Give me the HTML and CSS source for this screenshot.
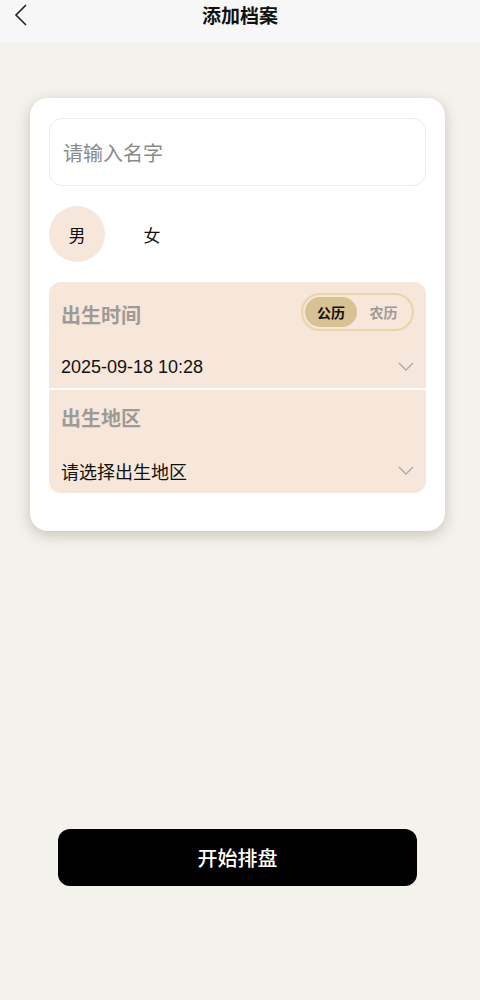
FILE: index.html
```html
<!DOCTYPE html>
<html lang="zh">
<head>
<meta charset="utf-8">
<title>添加档案</title>
<link rel="stylesheet" href="styles.css">
</head>
<body>
<header class="topbar">
  <span class="back">
    <svg width="14" height="22" viewBox="0 0 14 22"><polyline points="12,1 2,11 12,21" fill="none" stroke="#222" stroke-width="1.6"/></svg>
  </span>
  <h1 class="title">添加档案</h1>
</header>
<main class="page">
  <section class="card">
    <div class="name-input">请输入名字</div>
    <div class="gender-row">
      <span class="gender active">男</span>
      <span class="gender">女</span>
    </div>
    <div class="panel panel-top">
      <div class="panel-head">
        <span class="label">出生时间</span>
        <div class="toggle">
          <span class="toggle-item on">公历</span>
          <span class="toggle-item">农历</span>
        </div>
      </div>
      <div class="value-row date-row">
        <span class="value">2025-09-18 10:28</span>
        <svg class="chev" width="16" height="10" viewBox="0 0 16 10"><polyline points="1,1 8,8 15,1" fill="none" stroke="#b0aaa5" stroke-width="1.4"/></svg>
      </div>
    </div>
    <div class="panel panel-bottom">
      <div class="panel-head head2">
        <span class="label">出生地区</span>
      </div>
      <div class="value-row place-row">
        <span class="value">请选择出生地区</span>
        <svg class="chev" width="16" height="10" viewBox="0 0 16 10"><polyline points="1,1 8,8 15,1" fill="none" stroke="#b0aaa5" stroke-width="1.4"/></svg>
      </div>
    </div>
  </section>
  <button class="start">开始排盘</button>
</main>
</body>
</html>
```

FILE: styles.css
```css
* { box-sizing: border-box; }
html, body { margin: 0; padding: 0; }
body {
  background: #f4f2ed;
  font-family: "Liberation Sans", "Noto Sans CJK SC", sans-serif;
  color: #111;
  width: 480px;
  min-height: 1000px;
}
.topbar {
  height: 43px;
  background: #f7f7f7;
  display: flex;
  align-items: center;
  justify-content: center;
  position: relative;
}
.back {
  position: absolute;
  left: 14px;
  top: 4px;
  display: flex;
}
.title {
  margin: 0;
  margin-top: -14px;
  font-size: 19px;
  font-weight: 700;
  color: #111;
}
.page {
  display: flex;
  flex-direction: column;
}
.card {
  margin: 55px 0 0 30px;
  width: 415px;
  background: #fff;
  border-radius: 18px;
  padding: 20px 19px 38px 19px;
  box-shadow: 0 4px 14px rgba(110, 95, 70, 0.32);
}
.name-input {
  height: 68px;
  border: 1.5px solid #f0eaea;
  border-radius: 13px;
  padding-left: 13px;
  display: flex;
  align-items: center;
  font-size: 20px;
  color: #8a8a8a;
}
.gender-row {
  display: flex;
  gap: 19px;
  margin-top: 20px;
}
.gender {
  width: 56px;
  height: 56px;
  border-radius: 50%;
  display: flex;
  align-items: center;
  justify-content: center;
  font-size: 17px;
  color: #111;
}
.gender.active { background: #f7e6da; }
.panel {
  background: #f7e6da;
  padding: 0 12px;
}
.panel-top {
  margin-top: 20px;
  border-radius: 12px 12px 0 0;
  height: 106px;
  padding-top: 11px;
}
.panel-bottom {
  margin-top: 2px;
  border-radius: 0 0 12px 12px;
  height: 103px;
  padding-top: 16px;
}
.panel-head {
  display: flex;
  justify-content: space-between;
  align-items: center;
  height: 38px;
}
.panel-head .label { margin-top: 7px; }
.head2 { height: 24px; }
.head2 .label { margin-top: 1px; }
.label {
  font-size: 20px;
  font-weight: 700;
  color: #9d9a97;
  line-height: 24px;
}
.toggle {
  width: 113px;
  height: 38px;
  border: 2px solid #ead4a9;
  border-radius: 19px;
  padding: 2px;
  display: flex;
}
.toggle-item {
  flex: 1;
  display: flex;
  align-items: center;
  justify-content: center;
  font-size: 14px;
  font-weight: 700;
  color: #9c9995;
  border-radius: 15px;
}
.toggle-item.on {
  background: #d8c193;
  color: #111;
  flex: 0 0 52px;
}
.value-row {
  display: flex;
  justify-content: space-between;
  align-items: center;
  height: 24px;
}
.date-row { margin-top: 24px; }
.place-row { margin-top: 29px; }
.value {
  font-size: 18px;
  color: #111;
}
.start {
  margin: 298px 0 0 58px;
  width: 359px;
  height: 57px;
  border: none;
  border-radius: 12px;
  background: #000;
  color: #fff;
  font-family: "Liberation Sans", "Noto Sans CJK SC", sans-serif;
  font-size: 20px;
  font-weight: 500;
}
```
